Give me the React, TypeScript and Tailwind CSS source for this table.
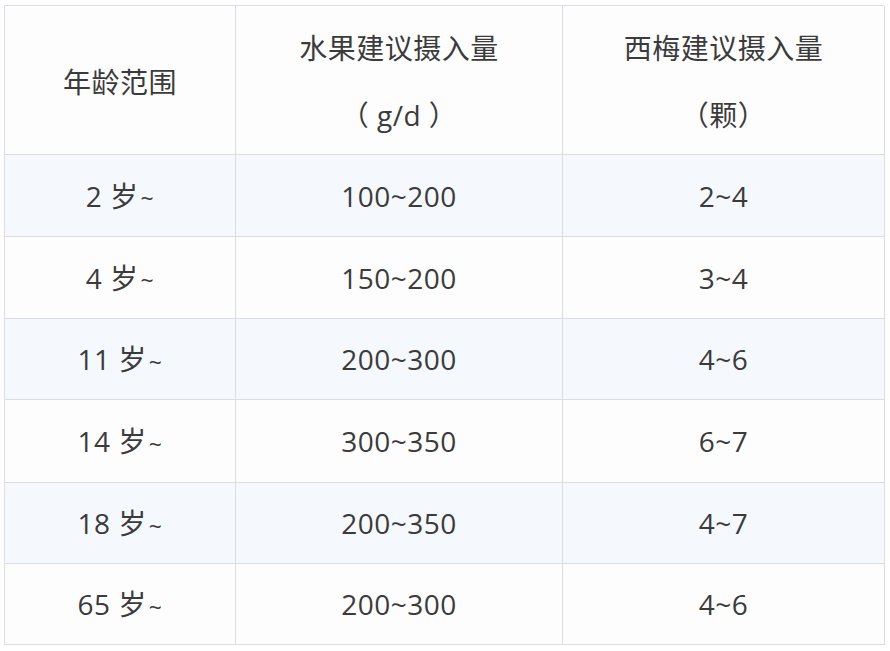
import React from "react";

const rows = [
  { age: "2 岁", fruit: "100~200", prune: "2~4", h: "h-[82px]", blue: true },
  { age: "4 岁", fruit: "150~200", prune: "3~4", h: "h-[82px]", blue: false },
  { age: "11 岁", fruit: "200~300", prune: "4~6", h: "h-[81px]", blue: true },
  { age: "14 岁", fruit: "300~350", prune: "6~7", h: "h-[83px]", blue: false },
  { age: "18 岁", fruit: "200~350", prune: "4~7", h: "h-[81px]", blue: true },
  { age: "65 岁", fruit: "200~300", prune: "4~6", h: "h-[81px]", blue: false },
];

export default function App() {
  return (
    <div
      className="w-[890px] h-[651px] bg-white pl-[4px] pt-[5px] text-[#3b3b3b] text-[28px] tracking-[0.5px]"
      style={{ fontFamily: '"Open Sans", "Noto Sans CJK SC", sans-serif' }}
    >
      <div className="w-[880px] border-l border-t border-[#dadde3] grid grid-cols-[231px_327px_322px]">
        <div className="h-[149px] border-r border-b border-[#dadde3] bg-[#fdfdfd] flex items-center justify-center pt-[3px]">
          年龄范围
        </div>
        <div className="h-[149px] border-r border-b border-[#dadde3] bg-[#fdfdfd] flex flex-col items-center pt-[9px]">
          <div className="h-[67px] leading-[67px]">水果建议摄入量</div>
          <div className="h-[67px] leading-[67px]">（ g/d ）</div>
        </div>
        <div className="h-[149px] border-r border-b border-[#dadde3] bg-[#fdfdfd] flex flex-col items-center pt-[9px]">
          <div className="h-[67px] leading-[67px]">西梅建议摄入量</div>
          <div className="h-[67px] leading-[67px]">（颗）</div>
        </div>
        {rows.map((r, i) => (
          <React.Fragment key={i}>
            <div
              className={`${r.h} border-r border-b border-[#dadde3] flex items-center justify-center ${r.blue ? "bg-[#f5f8fc]" : "bg-[#fdfdfd]"}`}
            >
              {r.age}
              <span className="text-[23px] ml-[2px] relative top-[3px]">~</span>
            </div>
            <div
              className={`${r.h} border-r border-b border-[#dadde3] flex items-center justify-center ${r.blue ? "bg-[#f5f8fc]" : "bg-[#fdfdfd]"}`}
            >
              {r.fruit}
            </div>
            <div
              className={`${r.h} border-r border-b border-[#dadde3] flex items-center justify-center ${r.blue ? "bg-[#f5f8fc]" : "bg-[#fdfdfd]"}`}
            >
              {r.prune}
            </div>
          </React.Fragment>
        ))}
      </div>
    </div>
  );
}
